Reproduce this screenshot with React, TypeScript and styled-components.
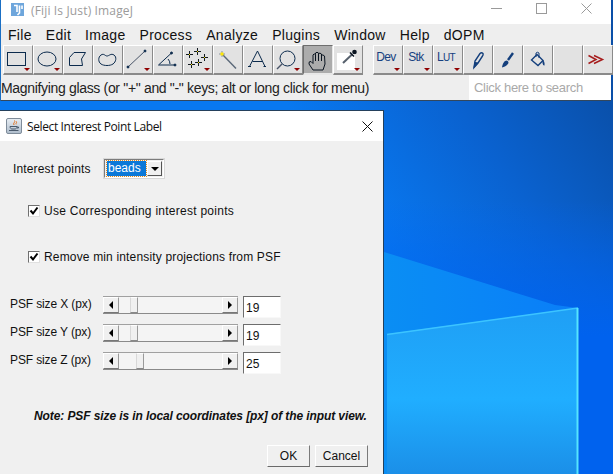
import React from "react"
import styled, { createGlobalStyle } from "styled-components"

const GlobalStyle = createGlobalStyle`
  html, body {
    margin: 0;
    padding: 0;
    background: #0a6fd8;
  }
  * {
    box-sizing: border-box;
  }
`

const Desktop = styled.div`
  position: relative;
  width: 613px;
  height: 474px;
  overflow: hidden;
  font-family: "Liberation Sans", Arial, sans-serif;
  color: #000;
`

const Wallpaper = styled.svg`
  position: absolute;
  left: 0;
  top: 0;
`

const ImageJWindow = styled.div`
  position: absolute;
  left: 0;
  top: 0;
  width: 611px;
  height: 101px;
  display: flex;
  flex-direction: column;
  background: #eeeeee;
  border-left: 1px solid #1a6fc4;
  border-bottom: 1px solid #33475c;
`

const TitleBar = styled.div`
  height: 24px;
  flex: none;
  display: flex;
  align-items: center;
  background: #fff;
  padding-left: 10px;
`

const TitleText = styled.span`
  margin-left: 6px;
  font-family: "Open Sans", sans-serif;
  font-size: 12px;
  letter-spacing: 0.15px;
  color: #9b9b9b;
  flex: 1;
  position: relative;
  top: -2px;
`

const WindowControls = styled.div`
  display: flex;
  align-items: center;
  color: #9a9a9a;
  margin-right: 19px;
  gap: 34px;
  position: relative;
  top: -4px;
`

const MenuBar = styled.div`
  height: 21px;
  flex: none;
  display: flex;
  align-items: center;
`

const MenuItem = styled.span`
  padding: 0 7px;
  font-size: 14px;
  letter-spacing: 0.3px;
  color: #111;
`

const ToolBar = styled.div`
  height: 30px;
  flex: none;
  display: flex;
  padding-left: 2px;
`

const ToolGap = styled.div`
  width: 10px;
  flex: none;
`

const ToolButton = styled.div<{ $active?: boolean }>`
  position: relative;
  width: 30px;
  height: 30px;
  flex: none;
  display: flex;
  align-items: center;
  justify-content: center;
  background: ${({ $active }) => ($active ? "#acacac" : "#e2e2e2")};
  border-top: 1px solid ${({ $active }) => ($active ? "#6e6e6e" : "#fff")};
  border-left: 1px solid ${({ $active }) => ($active ? "#6e6e6e" : "#fff")};
  border-right: 1px solid ${({ $active }) => ($active ? "#e8e8e8" : "#8a8a8a")};
  border-bottom: 2px solid ${({ $active }) => ($active ? "#e8e8e8" : "#8a8a8a")};
`

const ToolSvg = styled.svg`
  position: absolute;
  left: -1px;
  top: -1px;
`

const ToolLabel = styled.span`
  font-size: 12px;
  letter-spacing: -0.6px;
  color: #153f80;
  margin: -6px 4px 0 0;

  small {
    font-size: 10px;
  }
`

const MenuMark = styled.i`
  position: absolute;
  right: 2px;
  bottom: 2px;
  width: 0;
  height: 0;
  border-left: 3px solid transparent;
  border-right: 3px solid transparent;
  border-top: 3px solid #8f0000;
`

const StatusBar = styled.div`
  flex: 1;
  display: flex;
  align-items: stretch;
  min-height: 0;
`

const StatusText = styled.div`
  flex: 1;
  font-size: 14px;
  line-height: 26px;
  letter-spacing: -0.33px;
  color: #222;
  white-space: nowrap;
`

const SearchBox = styled.div`
  width: 142px;
  flex: none;
  background: #fff;
  padding-left: 5px;
  font-size: 13px;
  line-height: 26px;
  color: #a9a9a9;
  letter-spacing: -0.3px;
`

const Dialog = styled.div`
  position: absolute;
  left: 0;
  top: 110px;
  width: 384px;
  height: 364px;
  display: flex;
  flex-direction: column;
  background: #f0f0f0;
  border-top: 1px solid #24405c;
  border-right: 1px solid #24405c;
`

const DialogTitleBar = styled.div`
  height: 30px;
  flex: none;
  display: flex;
  align-items: center;
  background: #fff;
  padding: 0 10px 0 6px;
  font-family: "Open Sans", sans-serif;
  font-size: 12px;
  letter-spacing: -0.38px;
  color: #111;
`

const DialogTitle = styled.span`
  flex: 1;
  margin-left: 5px;
`

const DialogBody = styled.div`
  flex: 1;
  display: flex;
  flex-direction: column;
  font-size: 12px;
  color: #111;
`

const ChoiceRow = styled.div`
  display: flex;
  align-items: center;
  height: 21px;
  margin: 17px 0 0 13px;
`

const ChoiceLabel = styled.span`
  width: 90px;
  flex: none;
  letter-spacing: 0.15px;
`

const Choice = styled.div`
  width: 62px;
  height: 21px;
  display: flex;
  align-items: center;
  padding: 0 1px 0 2px;
  background: #f0f0f0;
  border: 2px solid;
  border-color: #7c7c7c #fff #fff #7c7c7c;
  outline: 1px solid #d8d8d8;
  outline-offset: -1px;
`

const ChoiceValue = styled.span`
  width: 40px;
  height: 15px;
  line-height: 15px;
  padding-left: 1px;
  background: #0a78d8;
  color: #fff;
  outline: 1px dotted #e08a20;
`

const ChoiceArrow = styled.span`
  width: 15px;
  height: 15px;
  margin-left: 1px;
  display: flex;
  align-items: center;
  justify-content: center;
  background: #f0f0f0;
  border: 1px solid;
  border-color: #fff #555 #555 #fff;
`

const Triangle = styled.i<{ $dir: "down" | "left" | "right" }>`
  width: 0;
  height: 0;
  ${({ $dir }) =>
    $dir === "down"
      ? "border-left: 4px solid transparent; border-right: 4px solid transparent; border-top: 4px solid #000;"
      : `border-top: 4px solid transparent; border-bottom: 4px solid transparent; ${
          $dir === "left" ? "border-right" : "border-left"
        }: 4px solid #000;`}
`

const CheckRow = styled.label<{ $gap: number; $spacing: number }>`
  display: flex;
  align-items: center;
  height: 14px;
  margin: ${({ $gap }) => $gap}px 0 0 28px;
  letter-spacing: ${({ $spacing }) => $spacing}px;
`

const CheckBox = styled.span`
  width: 12px;
  height: 12px;
  flex: none;
  margin-right: 4px;
  display: flex;
  align-items: center;
  justify-content: center;
  background: #fff;
  border: 1px solid;
  border-color: #707070 #e0e0e0 #e0e0e0 #707070;
`

const SliderRows = styled.div`
  display: flex;
  flex-direction: column;
  gap: 6px;
  margin: 32px 0 0 10px;
`

const SliderRow = styled.div`
  display: flex;
  align-items: flex-start;
  height: 22px;
`

const SliderLabel = styled.span`
  width: 93px;
  flex: none;
  line-height: 16px;
  letter-spacing: -0.12px;
`

const ScrollBar = styled.div`
  width: 135px;
  height: 18px;
  flex: none;
  display: flex;
  background: #f4f4f4;
  border-top: 1px solid #a0a0a0;
  border-bottom: 1px solid #8a8a8a;
`

const ScrollArrow = styled.span`
  width: 16px;
  flex: none;
  display: flex;
  align-items: center;
  justify-content: center;
  background: #f0f0f0;
  border: 1px solid;
  border-color: #fff #9a9a9a #777 #fff;
`

const ScrollTrack = styled.div`
  flex: 1;
  display: flex;
  background: #f4f4f4;
`

const ScrollThumb = styled.span`
  width: 8px;
  flex: none;
  background: #f0f0f0;
  border: 1px solid;
  border-color: #fff #9a9a9a #888 #d8d8d8;
`

const ValueField = styled.div`
  width: 38px;
  height: 22px;
  margin-left: 5px;
  flex: none;
  padding: 3px 0 0 2px;
  background: #fff;
  border: 1px solid;
  border-color: #6d6d6d #f8f8f8 #f8f8f8 #6d6d6d;
  line-height: 16px;
`

const Note = styled.div`
  margin: 35px 0 0 34px;
  font-size: 12px;
  line-height: 14px;
  font-weight: bold;
  font-style: italic;
  white-space: nowrap;
  letter-spacing: -0.1px;
`

const DialogButtons = styled.div`
  display: flex;
  justify-content: flex-end;
  gap: 5px;
  margin: 22px 15px 0 0;
`

const DialogButton = styled.button<{ $width: number }>`
  width: ${({ $width }) => $width}px;
  height: 22px;
  padding: 0;
  font-family: inherit;
  font-size: 12px;
  color: #111;
  background: #f0f0f0;
  border: 1px solid;
  border-color: #fff #7a7a7a #6a6a6a #fff;
`

const ICON = "#0c2b4d"
const NAVY = "#143f7c"

const Tool = ({
  children,
  menu,
  active,
}: {
  children?: React.ReactNode
  menu?: boolean
  active?: boolean
}) => (
  <ToolButton $active={active}>
    <ToolSvg width="30" height="30" viewBox="0 0 30 30" fill="none" stroke={ICON} strokeWidth="1">
      {children}
    </ToolSvg>
    {menu && <MenuMark />}
  </ToolButton>
)

const TextTool = ({ children }: { children: React.ReactNode }) => (
  <ToolButton>
    <ToolLabel>{children}</ToolLabel>
    <MenuMark />
  </ToolButton>
)

const Cross = ({ x, y }: { x: number; y: number }) => (
  <>
    <path d={`M${x - 3} ${y + 0.5}H${x + 4}M${x + 0.5} ${y - 3}V${y + 4}`} stroke="#101820" />
    <rect x={x} y={y} width="1" height="1" fill="#ffe800" stroke="none" />
  </>
)

const FijiIcon = () => (
  <svg width="14" height="14" viewBox="0 0 14 14" style={{ marginTop: -4 }}>
    <rect x="0" y="0" width="13" height="13" fill="#6ea6dc" />
    <path d="M3 2.5h3v6.5M8.5 2.5V10L6.5 12M11 2.5V6" stroke="#fff" strokeWidth="1.6" fill="none" />
  </svg>
)

const CoffeeIcon = () => (
  <svg width="16" height="16" viewBox="0 0 16 16">
    <defs>
      <linearGradient id="cup" x1="0" y1="0" x2="0" y2="1">
        <stop offset="0" stopColor="#e8eef4" />
        <stop offset="1" stopColor="#aebccb" />
      </linearGradient>
    </defs>
    <rect x="0.5" y="0.5" width="15" height="15" rx="1.5" fill="url(#cup)" stroke="#7f8c9a" />
    <path d="M8.5 2.5c1.5 1.5-2 2.5-.5 4.5M10.5 3.5c.8 1-1 1.5-.3 2.8" stroke="#e2701a" fill="none" />
    <path d="M4 8.5h7c0 1.5-1 2.5-2 2.5H6c-1 0-2-1-2-2.5zM11 9h1.5v1H11M3 12.5h9.5" stroke="#4a5a6c" fill="none" />
  </svg>
)

const CheckMark = () => (
  <svg width="10" height="10" viewBox="0 0 10 10">
    <path d="M1.5 4.5L4 7.5L8.5 1.5" stroke="#000" strokeWidth="2" fill="none" />
  </svg>
)

const Check = ({ label, gap, spacing }: { label: string; gap: number; spacing: number }) => (
  <CheckRow $gap={gap} $spacing={spacing}>
    <CheckBox>
      <CheckMark />
    </CheckBox>
    {label}
  </CheckRow>
)

const Slider = ({ label, offset, value }: { label: string; offset: number; value: string }) => (
  <SliderRow>
    <SliderLabel>{label}</SliderLabel>
    <ScrollBar>
      <ScrollArrow>
        <Triangle $dir="left" />
      </ScrollArrow>
      <ScrollTrack>
        <ScrollThumb style={{ marginLeft: offset }} />
      </ScrollTrack>
      <ScrollArrow>
        <Triangle $dir="right" />
      </ScrollArrow>
    </ScrollBar>
    <ValueField>{value}</ValueField>
  </SliderRow>
)

const menus = ["File", "Edit", "Image", "Process", "Analyze", "Plugins", "Window", "Help", "dOPM"]

export default function App() {
  return (
    <Desktop>
      <GlobalStyle />
      <Wallpaper width="613" height="474" viewBox="0 0 613 474">
        <defs>
          <linearGradient id="sky" gradientUnits="userSpaceOnUse" x1="620" y1="100" x2="400" y2="260">
            <stop offset="0" stopColor="#0a4fa8" />
            <stop offset="0.5" stopColor="#0a62d0" />
            <stop offset="1" stopColor="#0878f0" />
          </linearGradient>
          <linearGradient id="edge" x1="0" y1="0" x2="0" y2="1">
            <stop offset="0" stopColor="#0062ee" stopOpacity="0" />
            <stop offset="0.5" stopColor="#0062ee" stopOpacity="1" />
          </linearGradient>
          <linearGradient id="wedge" x1="0" y1="0" x2="1" y2="0">
            <stop offset="0" stopColor="#0a8ef4" />
            <stop offset="1" stopColor="#0a7ef8" />
          </linearGradient>
          <linearGradient id="pane" x1="0" y1="0" x2="0" y2="1">
            <stop offset="0" stopColor="#1f9ff5" />
            <stop offset="0.55" stopColor="#20aeff" />
            <stop offset="1" stopColor="#1b8fe8" />
          </linearGradient>
        </defs>
        <rect width="613" height="474" fill="url(#sky)" />
        <rect x="384" y="200" width="229" height="274" fill="url(#edge)" />
        <polygon points="384,252 555,305 578,308 578,474 384,474" fill="url(#wedge)" />
        <polygon points="387,334 578,308 578,474 387,474" fill="url(#pane)" />
        <path d="M387 334.5L578 308" stroke="#3cc4ff" strokeWidth="1.5" />
        <path d="M577.5 308V474" stroke="#55e4ff" strokeWidth="2" />
      </Wallpaper>

      <ImageJWindow>
        <TitleBar>
          <FijiIcon />
          <TitleText>(Fiji Is Just) ImageJ</TitleText>
          <WindowControls>
            <svg width="11" height="11" viewBox="0 0 11 11" stroke="currentColor" fill="none">
              <path d="M0 5.5H11" />
            </svg>
            <svg width="11" height="11" viewBox="0 0 11 11" stroke="currentColor" fill="none">
              <rect x="0.5" y="0.5" width="10" height="10" />
            </svg>
            <svg width="11" height="11" viewBox="0 0 11 11" stroke="currentColor" fill="none">
              <path d="M0.5 0.5L10.5 10.5M10.5 0.5L0.5 10.5" />
            </svg>
          </WindowControls>
        </TitleBar>

        <MenuBar>
          {menus.map((m) => (
            <MenuItem key={m}>{m}</MenuItem>
          ))}
        </MenuBar>

        <ToolBar>
          <Tool menu>
            <rect x="4.5" y="7.5" width="18" height="13" />
          </Tool>
          <Tool menu>
            <ellipse cx="14" cy="14" rx="9" ry="7" />
          </Tool>
          <Tool>
            <path d="M6.5 12.5L11 7.5H22.5L18.5 14L19.5 20.5H6.5Z" />
          </Tool>
          <Tool>
            <path d="M8 10C11 8 12 11 14 11C16 11 18 8 21 10C24 12 23 17 20 19C17 21 11 21 8 19C5 17 5 12 8 10Z" />
          </Tool>
          <Tool menu>
            <path d="M5 22L22 6" stroke="#4a5568" />
            <circle cx="5" cy="22" r="1" fill={ICON} />
            <circle cx="22" cy="6" r="1" fill={ICON} />
          </Tool>
          <Tool>
            <path d="M5.5 20L18.5 8M5.5 20H22" />
            <path d="M15 14Q17 16 17 19" />
            <circle cx="18.5" cy="8" r="1" fill={ICON} />
            <circle cx="22" cy="20" r="1" fill={ICON} />
          </Tool>
          <Tool menu>
            <Cross x={6} y={9} />
            <Cross x={14} y={6} />
            <Cross x={21} y={12} />
            <Cross x={8} y={19} />
            <Cross x={15} y={17} />
          </Tool>
          <Tool>
            <path d="M9 9L23 23.5" stroke="#5a6878" strokeWidth="1.4" />
            <path d="M9 6V12M6 9H12" stroke="#8a94a0" />
            <rect x="7.5" y="7.5" width="3" height="3" fill="#ffe800" stroke="none" />
          </Tool>
          <Tool>
            <path d="M6.5 21.5L14.5 6L22 21.5M9.5 16.5H19.5" />
            <path d="M5 21.5H8M20.5 21.5H23" />
          </Tool>
          <Tool menu>
            <circle cx="14.5" cy="13.5" r="7.5" />
            <path d="M9 19L4 24" stroke="#4a5568" strokeWidth="1.5" />
          </Tool>
          <Tool active>
            <path
              d="M10 25L6 19Q5.5 16 8 16.5L10 18.5V10Q11 8 12.5 9.5V8Q14 6.5 15.5 8V8.5Q17 7.5 18.5 9V10Q20 9.5 21.5 11L22 19L20 25Z"
              stroke="#0a1420"
            />
            <path d="M12.5 9.5V16M15.5 8.5V16M18.5 10V16" stroke="#0a1420" />
          </Tool>
          <Tool menu>
            <rect x="4" y="8" width="18" height="17" fill="#fff" stroke="none" />
            <path d="M10 18L19 9.5" stroke="#56606c" strokeWidth="2" />
            <path d="M17 7.5L21 11.5" stroke="#0a1420" strokeWidth="1.6" />
            <circle cx="21.5" cy="7" r="2.3" fill="#0a1420" stroke="none" />
          </Tool>
          <ToolGap />
          <TextTool>Dev</TextTool>
          <TextTool>Stk</TextTool>
          <TextTool>
            L<small>UT</small>
          </TextTool>
          <Tool>
            <path d="M11 22.5L12 16L17 8.5Q18.5 7 20 8.5Q20.5 10 19.5 11L15 18Z" stroke={NAVY} strokeWidth="1.4" />
            <path d="M11 22.5L12 17.5L15 18Z" fill={NAVY} stroke={NAVY} />
          </Tool>
          <Tool>
            <path d="M15 15L20 8" stroke={NAVY} strokeWidth="2.4" />
            <path d="M9 22.5C9.5 19 11 15.5 14 15.5C16 16.5 16 18.5 14 20C13 21 11 22 9 22.5Z" fill={NAVY} stroke="none" />
          </Tool>
          <Tool>
            <path d="M8.5 15L14 9.5L20 15.5L15 20.5Z" stroke={NAVY} strokeWidth="1.4" />
            <path d="M13 12V8Q14.5 6.5 16 8V13" stroke={NAVY} />
            <path d="M19.5 15Q22 16 21.5 20.5Q20 21 19.5 18Z" fill={NAVY} stroke="none" />
          </Tool>
          <Tool />
          <Tool>
            <path d="M5.5 10.5L13 14.5L5.5 18.5M11 10.5L19.5 14.5L11 18.5" stroke="#a61c1c" strokeWidth="1.5" />
          </Tool>
        </ToolBar>

        <StatusBar>
          <StatusText>Magnifying glass (or "+" and "-" keys; alt or long click for menu)</StatusText>
          <SearchBox>Click here to search</SearchBox>
        </StatusBar>
      </ImageJWindow>

      <Dialog>
        <DialogTitleBar>
          <CoffeeIcon />
          <DialogTitle>Select Interest Point Label</DialogTitle>
          <svg width="11" height="11" viewBox="0 0 11 11" stroke="#111" fill="none">
            <path d="M0.5 0.5L10.5 10.5M10.5 0.5L0.5 10.5" />
          </svg>
        </DialogTitleBar>

        <DialogBody>
          <ChoiceRow>
            <ChoiceLabel>Interest points</ChoiceLabel>
            <Choice>
              <ChoiceValue>beads</ChoiceValue>
              <ChoiceArrow>
                <Triangle $dir="down" />
              </ChoiceArrow>
            </Choice>
          </ChoiceRow>
          <Check label="Use Corresponding interest points" gap={25} spacing={0.26} />
          <Check label="Remove min intensity projections from PSF" gap={32} spacing={0.16} />

          <SliderRows>
            <Slider label="PSF size X (px)" offset={11} value="19" />
            <Slider label="PSF size Y (px)" offset={11} value="19" />
            <Slider label="PSF size Z (px)" offset={17} value="25" />
          </SliderRows>

          <Note>Note: PSF size is in local coordinates [px] of the input view.</Note>

          <DialogButtons>
            <DialogButton $width={43}>OK</DialogButton>
            <DialogButton $width={53}>Cancel</DialogButton>
          </DialogButtons>
        </DialogBody>
      </Dialog>
    </Desktop>
  )
}
